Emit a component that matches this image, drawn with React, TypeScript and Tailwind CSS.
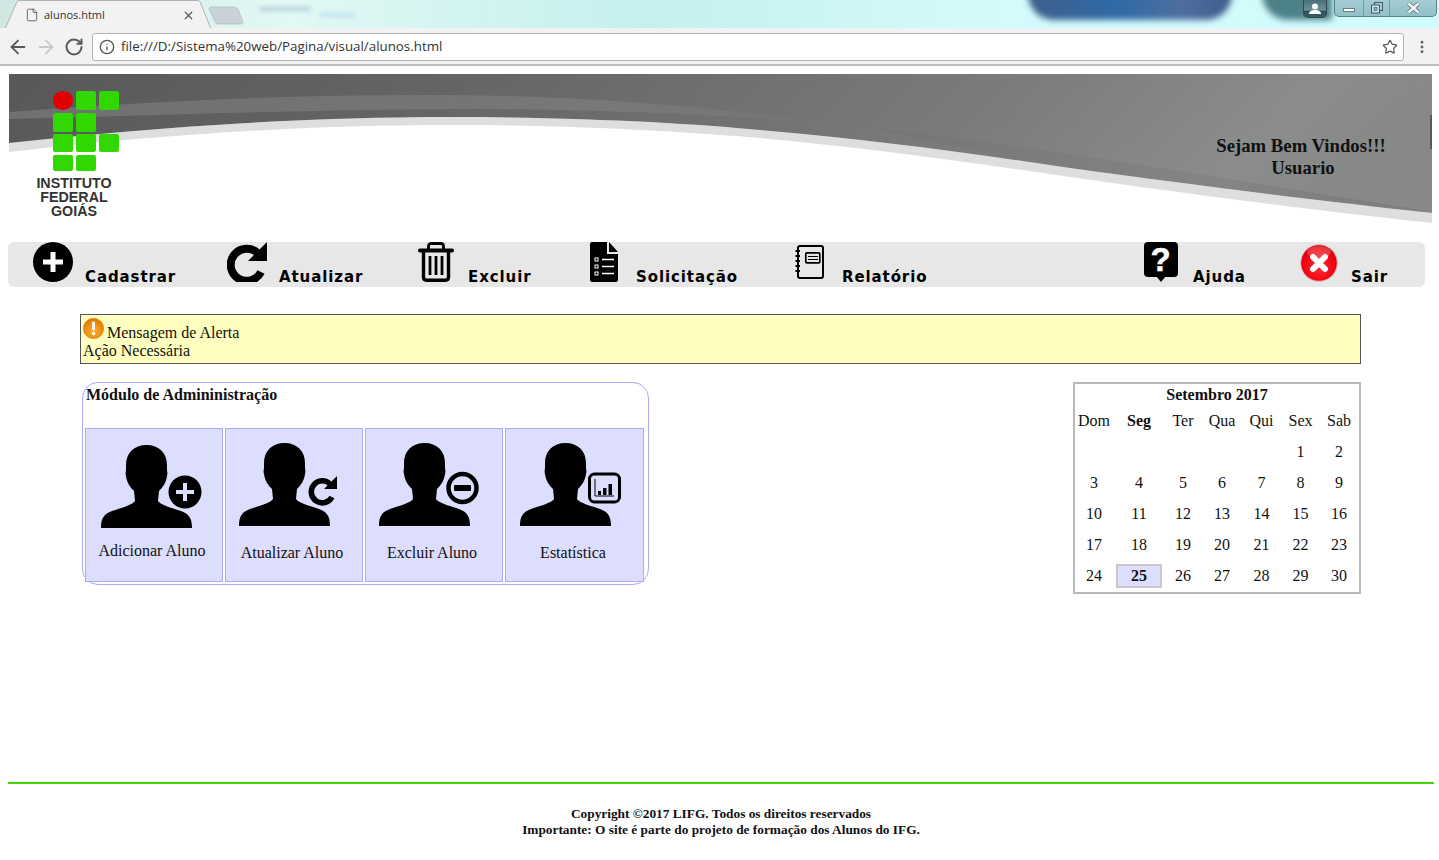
import React from "react";
import { ArrowLeft, ArrowRight, RotateCw, Info, Star, EllipsisVertical, File, X } from "lucide-react";

const userPath =
  "M45.5 0C58 0 66 8 66 20L66 25C66 27 67 28 66 31C65 38 62 42 58 46L57 56C60 60 68 62 80 66C88 69 91 73 91 83L0 83C0 73 3 69 11 66C23 62 31 60 34 56L33 46C29 42 26 38 25 31C24 28 25 27 25 25L25 20C25 8 33 0 45.5 0Z";

function Refresh({ size = 40 }: { size?: number }) {
  return (
    <svg width={size} height={size} viewBox="0 0 40 40" className="block">
      <path d="M31 11.5A16 16 0 1 0 34 30" fill="none" stroke="#000" strokeWidth="8" />
      <polygon points="40,0 40,19 21,19" fill="#000" />
    </svg>
  );
}

function UserIcon({ badge }: { badge: "add" | "refresh" | "remove" | "chart" }) {
  return (
    <svg width="104" height="86" viewBox="0 0 104 86" className="block" overflow="visible">
      <path d={userPath} fill="#000" />
      {badge === "add" && (
        <g>
          <circle cx="84" cy="47" r="16.5" fill="#000" />
          <path d="M84 38V56M75 47H93" stroke="#ddddff" strokeWidth="4" />
        </g>
      )}
      {badge === "refresh" && (
        <g transform="translate(69 33)" fill="none">
          <path d="M22 8A11 11 0 1 0 24 21" stroke="#000" strokeWidth="5.5" />
          <polygon points="29,0 29,13 16,13" fill="#000" />
        </g>
      )}
      {badge === "remove" && (
        <g>
          <circle cx="83.5" cy="45" r="14" fill="none" stroke="#000" strokeWidth="4.5" />
          <rect x="75" y="42" width="17" height="6" rx="1" fill="#000" />
        </g>
      )}
      {badge === "chart" && (
        <g>
          <rect x="69.5" y="31" width="30" height="28" rx="5" fill="none" stroke="#000" strokeWidth="3" />
          <path d="M75 36V53H94" fill="none" stroke="#000" strokeWidth="1" />
          <rect x="78" y="48" width="3" height="4" />
          <rect x="83" y="45" width="3.5" height="7" />
          <rect x="88.5" y="41" width="3.5" height="11" />
        </g>
      )}
    </svg>
  );
}

const toolbarItems: { w: string; label: string; icon: React.ReactNode; gap: string }[] = [
  {
    w: "w-[194px]",
    gap: "gap-[12px]",
    label: "Cadastrar",
    icon: (
      <svg width="40" height="40" viewBox="0 0 40 40" className="block">
        <circle cx="20" cy="20" r="20" fill="#000" />
        <path d="M20 10V30M10 20H30" stroke="#fff" strokeWidth="5" />
      </svg>
    ),
  },
  { w: "w-[191px]", gap: "gap-[12px]", label: "Atualizar", icon: <Refresh /> },
  {
    w: "w-[172px]",
    gap: "gap-[14px]",
    label: "Excluir",
    icon: (
      <svg width="36" height="40" viewBox="0 0 36 40" className="block">
        <path d="M2 8.5H34" stroke="#000" strokeWidth="4" strokeLinecap="round" />
        <path d="M10.5 7V4C10.5 2 11.5 1.5 13.5 1.5H22.5C24.5 1.5 25.5 2 25.5 4V7" fill="none" stroke="#000" strokeWidth="2.8" />
        <path d="M5.5 10V35C5.5 37 6.5 38.2 8.5 38.2H27.5C29.5 38.2 30.5 37 30.5 35V10" fill="none" stroke="#000" strokeWidth="3.4" />
        <path d="M12 14V33M18 14V33M24 14V33" stroke="#000" strokeWidth="2.8" />
      </svg>
    ),
  },
  {
    w: "w-[205px]",
    gap: "gap-[18px]",
    label: "Solicitação",
    icon: (
      <svg width="28" height="40" viewBox="0 0 28 40" className="block">
        <path d="M2 0H17V12H28V38C28 39 27 40 26 40H2C1 40 0 39 0 38V2C0 1 1 0 2 0Z" fill="#000" />
        <path d="M19 0L28 10H19Z" fill="#000" />
        <g fill="none" stroke="#fff" strokeWidth="1">
          <rect x="5" y="16" width="3" height="3" />
          <rect x="5" y="23" width="3" height="3" />
          <rect x="5" y="30" width="3" height="3" />
        </g>
        <path d="M12 17.5H24M12 24.5H24M12 31.5H24" stroke="#fff" strokeWidth="1.6" />
      </svg>
    ),
  },
  {
    w: "w-[349px]",
    gap: "gap-[18px]",
    label: "Relatório",
    icon: (
      <svg width="29" height="40" viewBox="0 0 29 40" className="block">
        <rect x="3" y="4" width="25" height="32" rx="2" fill="none" stroke="#000" strokeWidth="2" />
        <rect x="10.8" y="10.8" width="14" height="10" rx="1" fill="none" stroke="#000" strokeWidth="1.7" />
        <path d="M13 14.5H23M13 17.5H23" stroke="#000" strokeWidth="1" />
        <path d="M0.5 9H5M0.5 14H5M0.5 19H5M0.5 24H5M0.5 29H5" stroke="#000" strokeWidth="2.2" />
      </svg>
    ),
  },
  {
    w: "w-[156px]",
    gap: "gap-[15px]",
    label: "Ajuda",
    icon: (
      <svg width="34" height="40" viewBox="0 0 34 40" className="block">
        <rect x="0" y="0" width="34" height="35" rx="4" fill="#000" />
        <polygon points="12,34 22,34 17,40" fill="#000" />
        <text x="17" y="29" textAnchor="middle" fill="#fff" stroke="#fff" strokeWidth="0.5" fontSize="33" fontFamily="Liberation Sans, sans-serif">?</text>
      </svg>
    ),
  },
  {
    w: "w-[110px]",
    gap: "gap-[13px]",
    label: "Sair",
    icon: (
      <svg width="38" height="40" viewBox="0 0 38 40" className="block">
        <defs>
          <radialGradient id="sairRed" cx="50%" cy="60%" r="60%">
            <stop offset="0%" stopColor="#ff3030" />
            <stop offset="75%" stopColor="#f00010" />
            <stop offset="100%" stopColor="#c80008" />
          </radialGradient>
        </defs>
        <circle cx="19" cy="21" r="18.3" fill="url(#sairRed)" stroke="#e0b8b8" strokeWidth="1" />
        <ellipse cx="19" cy="10" rx="12" ry="6" fill="#fff" fillOpacity="0.22" />
        <path d="M13 15L25 27M25 15L13 27" stroke="#fff" strokeWidth="6" strokeLinecap="round" />
      </svg>
    ),
  },
];

const cards: { label: string; badge: "add" | "refresh" | "remove" | "chart"; pl: string; pt: string; mt: string; shift: string }[] = [
  { label: "Adicionar Aluno", badge: "add", pl: "pl-[15px]", pt: "pt-[16px]", mt: "mt-[11px]", shift: "-left-[2px]" },
  { label: "Atualizar Aluno", badge: "refresh", pl: "pl-[13px]", pt: "pt-[14px]", mt: "mt-[15px]", shift: "left-0" },
  { label: "Excluir Aluno", badge: "remove", pl: "pl-[13px]", pt: "pt-[14px]", mt: "mt-[15px]", shift: "left-0" },
  { label: "Estatística", badge: "chart", pl: "pl-[14px]", pt: "pt-[14px]", mt: "mt-[15px]", shift: "left-0" },
];

const days = ["Dom", "Seg", "Ter", "Qua", "Qui", "Sex", "Sab"];
const dates: (number | null)[] = [
  null, null, null, null, null, 1, 2,
  3, 4, 5, 6, 7, 8, 9,
  10, 11, 12, 13, 14, 15, 16,
  17, 18, 19, 20, 21, 22, 23,
  24, 25, 26, 27, 28, 29, 30,
];

function Square() {
  return <div className="w-[20px] h-full bg-[#30d800] rounded-[2px]" />;
}

export default function App() {
  return (
    <div className="w-[1439px] h-[860px] overflow-hidden bg-white font-['Liberation_Serif',serif] text-black">
      {/* Browser title bar */}
      <div className="relative h-[28px] overflow-hidden bg-[linear-gradient(90deg,#d2e6e2_0%,#e2f8f4_20%,#c4f0ee_45%,#d4fbfb_70%,#cffcfc_100%)]">
        <div className="absolute left-[1028px] top-[-20px] w-[204px] h-[40px] rounded-b-[26px] bg-[linear-gradient(90deg,#3f5f8c,#2f6aa8_45%,#4f6e9e_75%,#3f5c8c)] blur-[3px]" />
        <div className="absolute left-[1262px] top-[-20px] w-[70px] h-[40px] rounded-bl-[26px] bg-[#4d8188] blur-[3px]" />
        <div className="absolute left-[260px] top-[7px] w-[50px] h-[4px] bg-[#b4cede] blur-[2px]" />
        <div className="absolute left-[320px] top-[13px] w-[35px] h-[4px] bg-[#bfe2ee] blur-[2px]" />
        <svg width="250" height="28" viewBox="0 0 250 28" className="absolute left-0 top-0">
          <path d="M5 29L17 1.5C18 0.7 18.5 0.5 20 0.5H197C198.5 0.5 199 0.7 200 1.5L211 29Z" fill="#f2f2f2" stroke="#a9b4b6" />
          <path d="M209 8.5C209 7.5 210 7 211 7H234C236 7 237 8 238 9L243 22C243 23 242 24 241 24H218C216 24 215.5 23 215 22Z" fill="#c9d2d6" stroke="#aebcc0" strokeWidth="0.7" />
        </svg>
        <div className="absolute left-[25px] top-[7px] flex items-center font-['Open_Sans',sans-serif] text-[11px] leading-[16px] text-[#333]">
          <File size={14} strokeWidth={1.3} className="text-[#444]" />
          <span className="ml-[5px]">alunos.html</span>
        </div>
        <X size={13} strokeWidth={2.2} className="absolute left-[182px] top-[9px] text-[#555]" />
        {/* Window buttons */}
        <div className="absolute left-[1303px] top-0 w-[24px] h-[18px] rounded-b-[5px] border border-t-0 border-[#2f4a50] bg-[linear-gradient(180deg,#4a7078,#6c9298_60%,#2f5058_65%,#3c5c64)] flex items-center justify-center">
          <svg width="14" height="12" viewBox="0 0 14 12" className="block">
            <circle cx="7" cy="3.5" r="3" fill="#fff" />
            <path d="M1 11C1 8 4 7 7 7C10 7 13 8 13 11Z" fill="#fff" />
          </svg>
        </div>
        <div className="absolute left-[1334px] top-0 w-[103px] h-[17px] rounded-b-[5px] border border-t-0 border-[#56808a] bg-[linear-gradient(180deg,#a2cdd2,#92bfc8)] flex">
          <div className="w-[29px] flex items-center justify-center border-r border-[#6f9aa4]">
            <div className="w-[12px] h-[4px] mt-[3px] bg-white border border-[#6a7d86]" />
          </div>
          <div className="w-[26px] flex items-center justify-center border-r border-[#6f9aa4]">
            <svg width="12" height="12" viewBox="0 0 12 12" className="block">
              <rect x="3.5" y="0.5" width="8" height="8" fill="#a4ccd0" stroke="#3e5a62" />
              <rect x="0.5" y="3" width="8" height="8" fill="#c8e4e6" stroke="#3e5a62" />
              <rect x="3" y="5.5" width="3" height="3" fill="#8ab" stroke="#3e5a62" strokeWidth="0.6" />
            </svg>
          </div>
          <div className="flex-1 flex items-center justify-center">
            <svg width="15" height="12" viewBox="0 0 15 12" className="block">
              <path d="M2.5 1.5L12.5 10.5M12.5 1.5L2.5 10.5" stroke="#5d6e76" strokeWidth="4" />
              <path d="M2.5 1.5L12.5 10.5M12.5 1.5L2.5 10.5" stroke="#f4f4f4" strokeWidth="2.4" />
            </svg>
          </div>
        </div>
      </div>

      {/* Browser toolbar */}
      <div className="h-[38px] bg-[#f2f2f2] border-b-2 border-[#bcbcbc] flex items-center">
        <ArrowLeft size={22} strokeWidth={2} className="ml-[7px] mt-[1px] text-[#5a5a5a]" />
        <ArrowRight size={22} strokeWidth={2} className="ml-[6px] mt-[1px] text-[#c8c8c8]" />
        <RotateCw size={20} strokeWidth={2.4} className="ml-[7px] mt-[1px] text-[#5a5a5a]" />
        <div className="ml-[8px] w-[1312px] h-[28px] mt-[1px] rounded-[3px] border border-[#b4b4b4] bg-white flex items-center pl-[6px] pr-[5px] font-['Open_Sans',sans-serif] text-[13.33px] text-[#333]">
          <Info size={16} strokeWidth={2} className="text-[#555]" />
          <span className="ml-[6px] flex-1 pt-[1px]">file:///D:/Sistema%20web/Pagina/visual/alunos.html</span>
          <Star size={16} strokeWidth={1.8} className="text-[#555]" />
        </div>
        <EllipsisVertical size={16} strokeWidth={2.4} className="ml-[10px] mt-[1px] text-[#666]" />
      </div>

      {/* Page */}
      <div className="pt-[8px]">
        {/* Banner */}
        <div className="relative ml-[9px] w-[1423px] h-[149px]">
          <svg width="1423" height="149" viewBox="0 0 1423 149" className="block">
            <defs>
              <linearGradient id="bannerBg" x1="0" y1="0" x2="1" y2="0.1">
                <stop offset="0" stopColor="#58585a" />
                <stop offset="0.32" stopColor="#656566" />
                <stop offset="0.7" stopColor="#7a7b7b" />
                <stop offset="0.92" stopColor="#8b8d8d" />
                <stop offset="1" stopColor="#878989" />
              </linearGradient>
              <linearGradient id="bandFade" x1="0" y1="0" x2="1" y2="0">
                <stop offset="0" stopColor="#ffffff" stopOpacity="0.14" />
                <stop offset="0.7" stopColor="#ffffff" stopOpacity="0.09" />
                <stop offset="1" stopColor="#ffffff" stopOpacity="0" />
              </linearGradient>
              <linearGradient id="shadeFade" x1="0" y1="0" x2="1" y2="0">
                <stop offset="0" stopColor="#000000" stopOpacity="0.02" />
                <stop offset="0.6" stopColor="#000000" stopOpacity="0.05" />
                <stop offset="1" stopColor="#000000" stopOpacity="0.08" />
              </linearGradient>
            </defs>
            <path
              d="M0 69C130 55 280 43 441 43C570 43 680 49 751 56C860 65 960 79 1061 94C1200 113 1320 128 1423 139L1423 149C1320 138 1200 123 1061 103C960 88 860 74 751 64C680 58 570 51 441 51C280 51 130 63 0 78Z"
              fill="#dedede"
            />
            <path
              d="M0 0H1423V139C1320 128 1200 113 1061 94C960 79 860 65 751 56C680 49 570 43 441 43C280 43 130 55 0 69Z"
              fill="url(#bannerBg)"
            />
            <path d="M0 38C130 28 280 20 441 21C560 22 680 30 830 50C680 38 560 35 441 35C280 36 130 42 0 45Z" fill="url(#bandFade)" />
            <path d="M850 52C950 62 1100 85 1423 138C1300 125 1150 108 1000 85Z" fill="url(#shadeFade)" />
            <rect x="1421" y="41" width="2" height="34" fill="#5a5a5a" />
          </svg>
          {/* Logo */}
          <div className="absolute left-[44px] top-[17px] w-[66px] h-[97px] flex flex-col">
            <div className="h-[19px] flex gap-[3px]">
              <div className="w-[20px] h-[19px] rounded-full bg-[#e00000]" />
              <Square /><Square />
            </div>
            <div className="h-[19px] mt-[3px] flex gap-[3px]"><Square /><Square /></div>
            <div className="h-[18px] mt-[2px] flex gap-[3px]"><Square /><Square /><Square /></div>
            <div className="h-[16px] mt-[3px] flex gap-[3px]"><Square /><Square /></div>
          </div>
          <div className="absolute left-[15px] top-[102px] w-[100px] text-center font-['Liberation_Sans',sans-serif] font-bold text-[14.3px] leading-[14px] text-[#333]">
            INSTITUTO<br />FEDERAL<br />GOIÁS
          </div>
          <div className="absolute left-[1188px] top-[61px] w-[208px] text-center font-bold text-[18.72px] leading-[22px] text-[#111]">
            Sejam Bem Vindos!!!<br /><span className="relative left-[2px]">Usuario</span>
          </div>
        </div>

        {/* Menu */}
        <div className="mt-[19px] ml-[8px] w-[1417px] h-[45px] rounded-[6px] bg-[#e7e7e7] pl-[25px] flex font-['DejaVu_Sans',sans-serif] font-bold text-[15px] tracking-[0.9px] text-black">
          {toolbarItems.map((it) => (
            <div key={it.label} className={`${it.w} ${it.gap} flex items-start shrink-0`}>
              {it.icon}
              <span className="mt-[25px] leading-[20px]">{it.label}</span>
            </div>
          ))}
        </div>

        {/* Alert */}
        <div className="mt-[27px] ml-[80px] w-[1281px] h-[50px] border border-[#555] bg-[#ffffc0] px-[2px] text-[16px] leading-[18px] text-[#111]">
          <div className="flex items-start h-[27px] pt-[3px]">
            <svg width="21" height="21" viewBox="0 0 21 21" className="block shrink-0">
              <defs>
                <radialGradient id="alertO" cx="50%" cy="65%" r="60%">
                  <stop offset="0%" stopColor="#ffb030" />
                  <stop offset="100%" stopColor="#e87800" />
                </radialGradient>
              </defs>
              <circle cx="10.5" cy="10.5" r="10.2" fill="url(#alertO)" stroke="#c8780c" strokeWidth="0.5" />
              <rect x="9" y="3.5" width="3" height="9" rx="1.4" fill="#fff" />
              <circle cx="10.5" cy="15.5" r="1.7" fill="#fff" />
            </svg>
            <span className="ml-[3px] mt-[6px]">Mensagem de Alerta</span>
          </div>
          <div>Ação Necessária</div>
        </div>

        {/* Content */}
        <div className="mt-[18px] ml-[82px] w-[1279px] flex justify-between items-start">
          <div className="w-[567px] h-[203px] rounded-[16px] border border-[#aaaaff] pl-[2px]">
            <div className="h-[45px] pl-[1px] pt-[3px] font-bold text-[16px] leading-[18px] text-[#111]">Módulo de Admininistração</div>
            <div className="flex gap-[2px]">
              {cards.map((c, i) => (
                <div
                  key={c.label}
                  className={`${i === 3 ? "w-[139px]" : "w-[138px]"} h-[154px] border border-[#aaaaff] bg-[#ddddff] ${c.pl} ${c.pt}`}
                >
                  <UserIcon badge={c.badge} />
                  <div className={`${c.mt} -ml-[15px] w-[136px] text-center text-[16px] leading-[18px] text-[#111]`}>
                    <span className={`relative ${c.shift}`}>{c.label}</span>
                  </div>
                </div>
              ))}
            </div>
          </div>

          <div className="w-[288px] h-[212px] border-2 border-[#b8b8b8] text-[16px] text-[#111]">
            <div className="h-[21px] pt-[1px] text-center font-bold leading-[20px]">Setembro 2017</div>
            <div className="grid grid-cols-[38px_48px_36px_38px_37px_37px_36px] gap-x-[2px] auto-rows-[31px]">
              {days.map((d) => (
                <div key={d} className={`flex items-center justify-center ${d === "Seg" ? "font-bold" : ""}`}>{d}</div>
              ))}
              {dates.map((n, i) => (
                <div key={i} className="flex items-center justify-center">
                  {n === 25 ? (
                    <div className="w-[46px] h-[24px] border-2 border-[#c8c8c8] bg-[#ddddff] font-bold flex items-center justify-center">{n}</div>
                  ) : (
                    n
                  )}
                </div>
              ))}
            </div>
          </div>
        </div>

        {/* Footer */}
        <div className="mt-[188px] ml-[8px] w-[1426px] h-[2px] bg-[#44d400]" />
        <div className="mt-[22px] ml-[8px] w-[1426px] text-center font-bold text-[13.33px] leading-[16px] text-[#111]">
          Copyright ©2017 LIFG. Todos os direitos reservados<br />
          Importante: O site é parte do projeto de formação dos Alunos do IFG.
        </div>
      </div>
    </div>
  );
}
